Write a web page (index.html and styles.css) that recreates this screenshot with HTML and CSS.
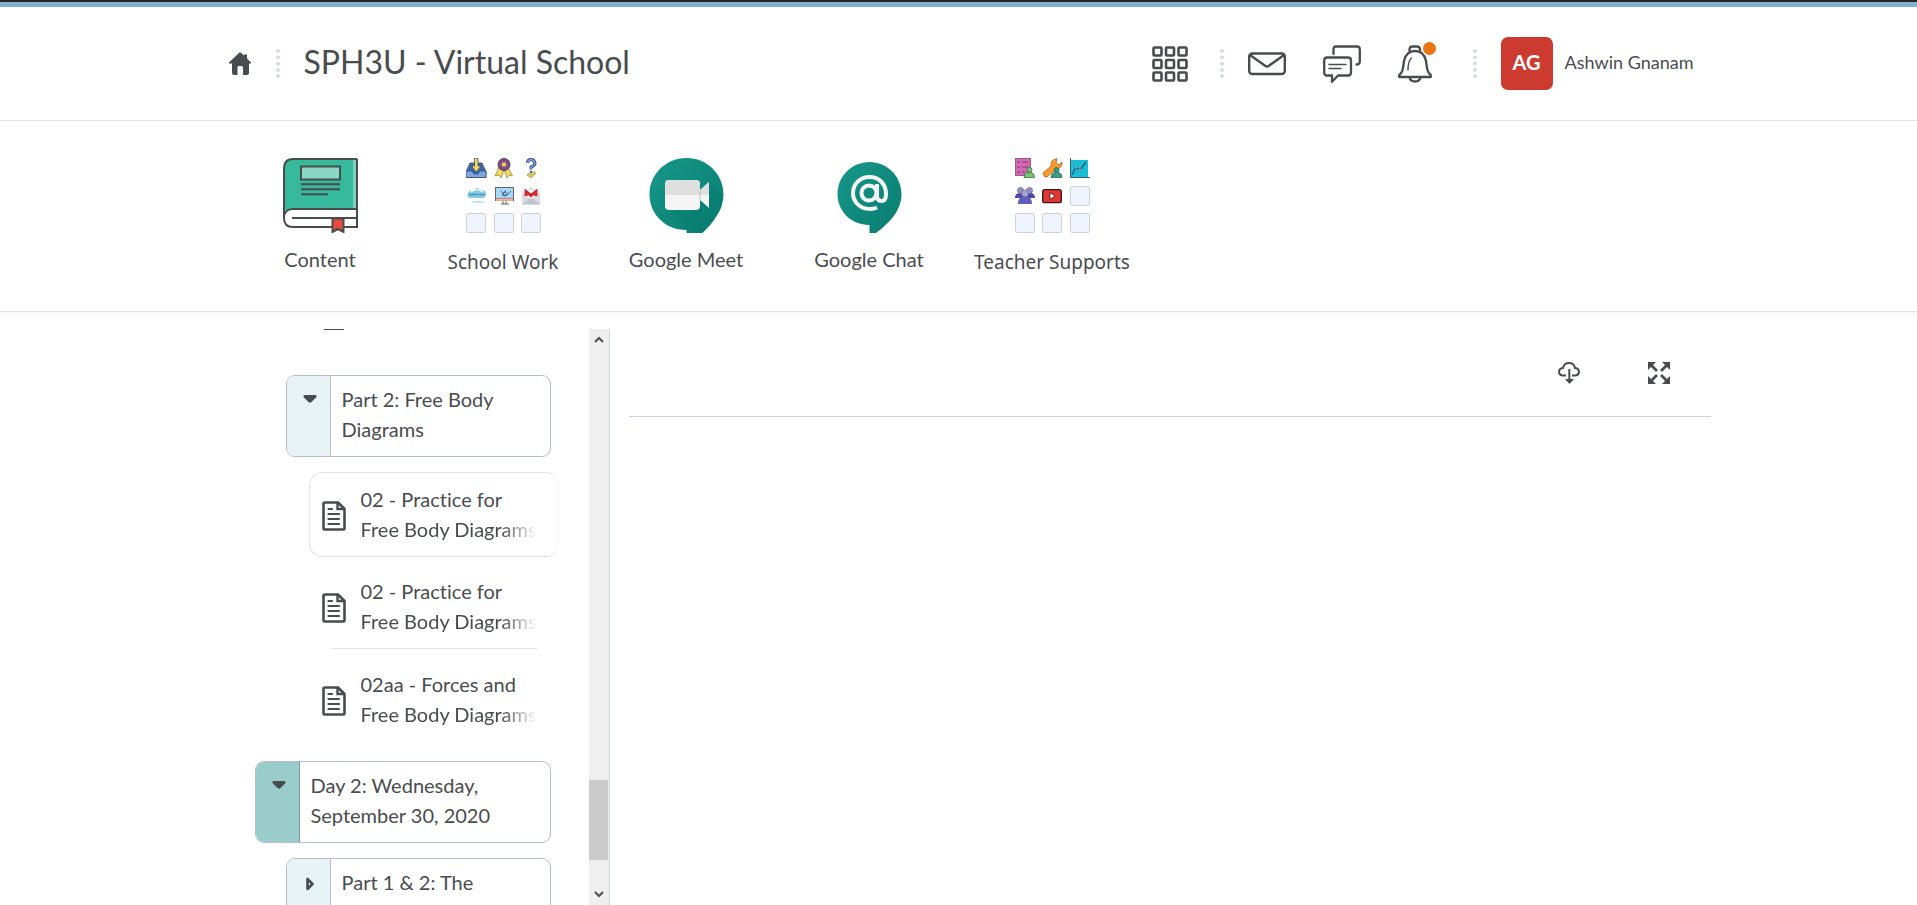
FILE: index.html
```html
<!DOCTYPE html>
<html lang="en">
<head>
<meta charset="utf-8">
<title>SPH3U - Virtual School</title>
<link rel="stylesheet" href="styles.css">
</head>
<body>
<svg class="defs" aria-hidden="true">
  <symbol id="doc" viewBox="0 0 24 30">
    <path d="M3.500 1.500H16L22.500 8V27.500Q22.500 28.500 21.500 28.500H2.500Q1.500 28.500 1.500 27.500V2.500Q1.500 1.500 3.500 1.500Z" fill="none" stroke="#494c4e" stroke-width="2.600" stroke-linejoin="round"/>
    <path d="M15.500 1.500V8H22.500" fill="none" stroke="#494c4e" stroke-width="2.400"/>
    <path d="M6.500 8H10M6.500 13H17M6.500 18H17M6.500 23H17" fill="none" stroke="#494c4e" stroke-width="2.200" stroke-linecap="round"/>
  </symbol>
  <symbol id="dots" viewBox="0 0 4 30">
    <g fill="#d3d9e3"><circle cx="2" cy="2" r="1.900"/><circle cx="2" cy="8.300" r="1.900"/><circle cx="2" cy="14.600" r="1.900"/><circle cx="2" cy="20.900" r="1.900"/><circle cx="2" cy="27.200" r="1.900"/></g>
  </symbol>
  <symbol id="slot" viewBox="0 0 20 20">
    <rect x=".5" y=".5" width="19" height="19" rx="1.500" fill="#eff3fb" stroke="#ccd3dc"/>
  </symbol>
</svg>

<div class="topline"></div>

<header class="masthead">
  <div class="wrap masthead-row">
    <a class="home" href="#" aria-label="My Home">
      <svg width="22" height="23" viewBox="0 0 22 23"><path d="M11 0 15 3.500V2.500H18V6.500L22 10.500V11.500H20V21Q20 23 18 23H14V15.500Q14 14 12.500 14H9.500Q8.500 14 8.500 15.500V23H5Q3 23 3 21V11.500H0V10.500Z" fill="#494c4e"/></svg>
    </a>
    <svg class="dots" width="4" height="30"><use href="#dots"/></svg>
    <h1><a href="#">SPH3U - Virtual School</a></h1>
    <nav class="tools" aria-label="Tools">
      <button type="button" aria-label="Select a course">
        <svg width="36" height="36" viewBox="0 0 36 36" fill="none" stroke="#494c4e" stroke-width="2.600"><rect x="1.500" y="1.500" width="8" height="8" rx="1"/><rect x="14" y="1.500" width="8" height="8" rx="1"/><rect x="26.500" y="1.500" width="8" height="8" rx="1"/><rect x="1.500" y="14" width="8" height="8" rx="1"/><rect x="14" y="14" width="8" height="8" rx="1"/><rect x="26.500" y="14" width="8" height="8" rx="1"/><rect x="1.500" y="26.500" width="8" height="8" rx="1"/><rect x="14" y="26.500" width="8" height="8" rx="1"/><rect x="26.500" y="26.500" width="8" height="8" rx="1"/></svg>
      </button>
      <svg class="dots" width="4" height="30"><use href="#dots"/></svg>
      <button type="button" aria-label="Message alerts">
        <svg width="38" height="38" viewBox="0 0 38 38" fill="none" stroke="#494c4e" stroke-width="2.400" stroke-linejoin="round"><rect x="1.200" y="8.500" width="35.600" height="20.500" rx="3"/><path d="M2 10 17.500 21Q19 22 20.500 21L36 10"/></svg>
      </button>
      <button type="button" aria-label="Subscription alerts">
        <svg width="38" height="38" viewBox="0 0 38 38" fill="none" stroke="#494c4e" stroke-width="2.300" stroke-linejoin="round" stroke-linecap="round"><path d="M10.500 9V4Q10.500 1.500 13 1.500H34Q36.800 1.500 36.800 4.500V16.500Q36.800 19.500 33.500 19.500"/><path d="M4 12.500H25Q28 12.500 28 15.500V27.500Q28 30.500 25 30.500H15L9 36.800V30.500H4Q1.200 30.500 1.200 27.500V15.500Q1.200 12.500 4 12.500Z"/><path d="M6 19.500H23M6 23.500H18" stroke-width="1.400"/></svg>
      </button>
      <button type="button" aria-label="Update alerts" class="bell">
        <svg width="34" height="38" viewBox="0 0 34 38" fill="none" stroke="#494c4e" stroke-width="2.300" stroke-linejoin="round" stroke-linecap="round"><path d="M11.500 6V4Q12 1.500 14.500 1.500H19Q21.500 1.500 22 4V6"/><path d="M17 6Q26 6 28 16C29 24 29.500 28 32.800 30V32H1.200V30C4.500 28 5 24 6 16Q8 6 17 6Z"/><path d="M11.500 32.500Q12.500 36.500 17 36.500T22.500 32.500"/><path d="M13.500 13Q10 16 10 25" stroke-width="1.400"/></svg>
        <span class="badge"></span>
      </button>
      <svg class="dots last" width="4" height="30"><use href="#dots"/></svg>
      <button type="button" class="user"><span class="avatar">AG</span><span class="name">Ashwin Gnanam</span></button>
    </nav>
  </div>
</header>

<nav class="coursenav" aria-label="Course">
  <div class="wrap coursenav-row">
    <a href="#">
      <svg width="75" height="75" viewBox="0 0 75 75"><path d="M10 1H74V52H1V11Q1 1 10 1Z" fill="#37b99b"/><path d="M70 2h3v49h-3z" fill="#82d1bf"/><path d="M10 51H74V69H10Q1 68 1 60T10 51Z" fill="#fff"/><g fill="none" stroke="#494c4e" stroke-width="2"><path d="M74 1H10Q1 1 1 11V60Q1 69 10 69H74V1M74 51H10Q1 51 1 60M9 60H73"/><rect x="18" y="8.500" width="39" height="13" fill="#8ad7c6"/><path d="M18 26.200H57M18 31.200H57M18 36.200H45"/></g><path d="M49.500 60.500H60.500V74L55 71 49.500 74Z" fill="#e84a42" stroke="#494c4e" stroke-width="2"/></svg>
      <span>Content</span>
    </a>
    <a href="#" class="folder">
      <svg width="75" height="75" viewBox="0 0 75 75">
        <g stroke="#3c4b6e" stroke-width=".8"><path d="M4 5H16L20 14V19.500H0V14Z" fill="#3f67ae"/><path d="M0 13H6L8 16H12L14 13H20V19.500H0Z" fill="#7ca6df"/><path d="M8.500 0H12V8H15L10.200 14 5.500 8H8.500Z" fill="#f3dd56"/></g>
        <path d="M33 9 29 18 33 17 35 20 38 12 41 20 43 17 46.500 18 42 9Z" fill="#f3dd56" stroke="#8e7b37" stroke-width=".7"/><circle cx="38" cy="6.500" r="6" fill="#7a4c8c" stroke="#59396a"/><circle cx="38" cy="6.500" r="2.300" fill="#f3c94e"/>
        <path d="M61.500 5Q61.500 1.500 65 1.500T69 5.500Q69 7.500 65 9V11.500" fill="none" stroke="#37558f" stroke-width="3"/><path d="M61.500 5Q61.500 1.500 65 1.500T69 5.500Q69 7.500 65 9V11.500" fill="none" stroke="#9fbce8" stroke-width="1"/><circle cx="65" cy="14" r="1.300" fill="#37558f"/><path d="M61.500 16 65 18.500 69.500 14" fill="none" stroke="#968b35" stroke-width="2.800"/><path d="M61.500 16 65 18.500 69.500 14" fill="none" stroke="#f0e05b" stroke-width="1.500"/>
        <path d="M4 40Q0 39 2 35 4 32 7 32 11 28 15 32 20 32 20 36T16 40Z" fill="#83caea"/><path d="M5 34Q11 29 17 34" stroke="#fff" stroke-width="1.500" fill="none"/><path d="M3 36.500H19" stroke="#397fa5" stroke-width="1.500" stroke-dasharray="1.500 .7"/><ellipse cx="12" cy="44" rx="7" ry="1" fill="#bfe5f5"/>
        <rect x="29.500" y="29.500" width="18" height="13" fill="#a7d8f5" stroke="#5d6674"/><path d="M30 40.500H47" stroke="#ec7656" stroke-width="1.200"/><path d="M30 42.500H47" stroke="#ddb66c"/><path d="M37 43V46M40 43V46M35 46H43" stroke="#5d6674"/><path d="M35 33 37 36 40 32M36 37H41L45 33" stroke="#416197" fill="none"/><circle cx="39" cy="36" r="2" fill="none" stroke="#416197"/>
        <path d="M56 35 65 29.500 74 35V46.500H56Z" fill="#d9dbe1"/><path d="M56 46.500 65 39 74 46.500" fill="#bfc4cd"/><path d="M58 32H72V36L65 41 58 36Z" fill="#fff"/><path d="M60 38V33.500L65 37.500 70 33.500V38" fill="none" stroke="#d7252e" stroke-width="3"/>
        <use href="#slot" x="0" y="55" width="20" height="20"/><use href="#slot" x="28" y="55" width="20" height="20"/><use href="#slot" x="55" y="55" width="20" height="20"/>
      </svg>
      <span>School Work</span>
    </a>
    <a href="#">
      <svg width="75" height="75" viewBox="0 0 75 75"><defs><linearGradient id="teal" x2="1" y2="1"><stop offset="0" stop-color="#16988a"/><stop offset="1" stop-color="#087c6f"/></linearGradient></defs><path d="M37.500 0C58 0 74.500 16 74.500 36.500 74.500 51 65 64 53.500 75H37.500V72C16 72 .5 56 .5 36.500.5 16 17 0 37.500 0Z" fill="url(#teal)"/><path d="M18 50 39 71 55 73 73 49V36L61 25 50 51Z" fill="#06796c" opacity=".35"/><path d="M20 22H47Q51 22 51 26V32L60 24V50L51 42V48Q51 52 47 52H20Q16 52 16 48V26Q16 22 20 22Z" fill="#f5f5f5"/><path d="M20 22H47Q51 22 51 26V32L60 24V37H16V26Q16 22 20 22Z" fill="#dedfdf"/><path d="M51 32V42" stroke="#b9c4c2" stroke-width="1"/></svg>
      <span>Google Meet</span>
    </a>
    <a href="#">
      <svg width="75" height="75" viewBox="0 0 75 75"><path d="M37.500 4C55 4 69.500 18 69.500 36 69.500 53 57 65 44 75H37.500V67C19 67 5.500 53 5.500 36 5.500 18 20 4 37.500 4Z" fill="url(#teal)"/><g fill="none" stroke="#f5f7f7" stroke-width="4"><circle cx="37" cy="35" r="7.500"/><path d="M45 26V38Q45 43 49.500 43T54 36C54 26 47 19 37.500 19S21 26 21 35 28 51 38 51Q42 51 45 49.500"/></g></svg>
      <span>Google Chat</span>
    </a>
    <a href="#" class="folder">
      <svg width="75" height="75" viewBox="0 0 75 75">
        <rect x=".5" y=".5" width="15" height="17" fill="#d568b4" stroke="#805070" stroke-width=".8"/><path d="M2 4 3 5 5 3M7 4H13M2 9 3 10 5 8M7 9H13M2 14 3 15 5 13M7 14H10" fill="none" stroke="#783765" stroke-width=".9"/><path d="M9 19.500Q9 15 13 14.500H16Q19.500 15 19.500 19.500Z" fill="#73c86b" stroke="#3b714a" stroke-width=".8"/><circle cx="14.500" cy="11.800" r="2.500" fill="#73c86b" stroke="#3b714a" stroke-width=".8"/>
        <path d="M28 15 36 8Q35 2 42 .5L41 5 44 7 47 4Q48 10 40 12L32 19Q29 20 28 15Z" fill="#fb9c29" stroke="#a7672a" stroke-width=".8"/><path d="M36 19.500Q36 15 40 14.500H43Q47 15 47 19.500Z" fill="#399e88" stroke="#24695c" stroke-width=".8"/><circle cx="41.500" cy="12" r="2.500" fill="#399e88" stroke="#24695c" stroke-width=".8"/>
        <rect x="56" y="2" width="17" height="17" fill="#16bdd5"/><path d="M55.500 0V19.500H75" fill="none" stroke="#3c6271"/><path d="M57 17 61 9 65 12 71 4" fill="none" stroke="#285d70" stroke-width="1.400"/><circle cx="61" cy="9" r="1.200" fill="#fff" stroke="#285d70" stroke-width=".7"/><circle cx="65" cy="12" r="1.200" fill="#fff" stroke="#285d70" stroke-width=".7"/>
        <path d="M0 40Q0 35 5 35H15Q20 35 20 40Z" fill="#4e48a2"/><circle cx="5.500" cy="32.500" r="3" fill="#9294bd" stroke="#60608c" stroke-width=".7"/><circle cx="14.500" cy="32.500" r="3" fill="#9294bd" stroke="#60608c" stroke-width=".7"/><path d="M3 46Q3 39 8 39H12Q17 39 17 46Z" fill="#615dc0"/><circle cx="10" cy="35.500" r="3.500" fill="#a6a4cf" stroke="#686493" stroke-width=".7"/>
        <rect x="27.700" y="31.700" width="18.600" height="13" rx="2" fill="#e33532" stroke="#3a1414" stroke-width="1.300"/><path d="M35 34.500V41.500L40 38Z" fill="#fff" stroke="#3a1414" stroke-width=".8"/>
        <use href="#slot" x="55" y="28" width="20" height="20"/><use href="#slot" x="0" y="55" width="20" height="20"/><use href="#slot" x="27" y="55" width="20" height="20"/><use href="#slot" x="55" y="55" width="20" height="20"/>
      </svg>
      <span>Teacher Supports</span>
    </a>
  </div>
</nav>

<main class="wrap viewer">
  <aside class="sidebar">
    <div class="tree">
      <div class="tree-top"><svg width="20" height="1" viewBox="0 0 20 1"><path d="M0 .5H20" stroke="#494c4e"/></svg></div>
      <section class="module part">
        <button type="button" aria-label="Collapse Part 2"><svg width="14" height="8" viewBox="0 0 14 8"><path d="M2 0H12Q14.500 0 13 2.500L8.500 7Q7 8.500 5.500 7L1 2.500Q-.5 0 2 0Z" fill="#494c4e"/></svg></button>
        <a href="#">Part 2: Free Body Diagrams</a>
      </section>
      <ul class="topics">
        <li class="selected"><a href="#"><svg width="24" height="30"><use href="#doc"/></svg><span class="title"><span>02 - Practice for</span><span class="fade">Free Body Diagrams</span></span></a></li>
        <li class="ruled"><a href="#"><svg width="24" height="30"><use href="#doc"/></svg><span class="title"><span>02 - Practice for</span><span class="fade">Free Body Diagrams</span></span></a></li>
        <li class="final"><a href="#"><svg width="24" height="30"><use href="#doc"/></svg><span class="title"><span>02aa - Forces and</span><span class="fade">Free Body Diagrams</span></span></a></li>
      </ul>
      <section class="module day">
        <button type="button" aria-label="Collapse Day 2"><svg width="14" height="8" viewBox="0 0 14 8"><path d="M2 0H12Q14.500 0 13 2.500L8.500 7Q7 8.500 5.500 7L1 2.500Q-.5 0 2 0Z" fill="#494c4e"/></svg></button>
        <a href="#">Day 2: Wednesday, September 30, 2020</a>
      </section>
      <section class="module part">
        <button type="button" aria-label="Expand Part 1 and 2"><svg width="8" height="14" viewBox="0 0 8 14"><path d="M1.500 2V12L6.500 7Z" fill="none" stroke="#494c4e" stroke-width="2.600" stroke-linejoin="round"/></svg></button>
        <a href="#">Part 1 &amp; 2: The</a>
      </section>
    </div>
    <div class="scrollbar">
      <svg width="10" height="7" viewBox="0 0 10 7"><path d="M1 6 5 2 9 6" fill="none" stroke="#505050" stroke-width="2"/></svg>
      <span class="thumb"></span>
      <svg width="10" height="7" viewBox="0 0 10 7"><path d="M1 1 5 5 9 1" fill="none" stroke="#505050" stroke-width="2"/></svg>
    </div>
  </aside>
  <section class="content">
    <div class="content-tools">
      <button type="button" aria-label="Download"><svg width="22" height="22" viewBox="0 0 22 22"><path d="M8 13.500H4.500Q1 13 1 9.800 1 6.500 5 6 6 1 11 1T17 6Q21 6.500 21 9.800 21 13 17.500 13.500H14" fill="none" stroke="#494c4e" stroke-width="2"/><path d="M11.300 7V17" stroke="#494c4e" stroke-width="2"/><path d="M7 17H16L12.500 21Q11.500 22 10.500 21Z" fill="#494c4e"/></svg></button>
      <button type="button" aria-label="Full screen"><svg width="22" height="22" viewBox="0 0 22 22"><path d="M0 0H8L0 8ZM22 0V8L14 0ZM0 22V14L8 22ZM22 22H14L22 14Z" fill="#494c4e"/><path d="M3 3 9 9M19 3 13 9M3 19 9 13M19 19 13 13" stroke="#494c4e" stroke-width="2.800"/></svg></button>
    </div>
  </section>
</main>
</body>
</html>
```

FILE: styles.css
```css
* { box-sizing: border-box; }
body {
  margin: 0;
  height: 100vh;
  display: flex;
  flex-direction: column;
  overflow: hidden;
  background: #fff;
  color: #494c4e;
  font: 20px/30px Lato, "Liberation Sans", sans-serif;
  font-variant-ligatures: none;
}
a { color: inherit; text-decoration: none; }
button { margin: 0; padding: 0; border: 0; background: none; color: inherit; font: inherit; }
svg { display: block; flex: none; }
.defs { position: absolute; width: 0; height: 0; }
.wrap { width: 100%; max-width: 1504px; margin: 0 auto; }

.topline { height: 7px; flex: none; border-top: 2px solid #252525; background: #82b3ce; }

.masthead { flex: none; border-bottom: 1px solid #e6e6e6; }
.masthead-row { display: flex; align-items: center; height: 113px; padding: 0 17px 0 22px; }
.home { margin-right: 25px; }
h1 { margin: 0 0 4px 24px; font-size: 32px; line-height: 40px; font-weight: 400; white-space: nowrap; }
.tools { display: flex; align-items: center; margin-left: auto; }
.tools > .dots { margin: 0 24px 0 32px; }
.tools > .last { margin-left: 41px; }
.tools button + button { margin-left: 37px; }
.bell { position: relative; }
.badge { position: absolute; top: -3px; right: -4px; width: 13px; height: 13px; border-radius: 50%; background: #e87511; }
.user { display: flex; align-items: center; gap: 12px; font-size: 18px; white-space: nowrap; }
.name { padding-bottom: 3px; }
.avatar { width: 52px; height: 53px; border-radius: 7px; background: #cd3a2f; color: #fff; font-size: 20px; font-weight: 700; line-height: 50px; text-align: center; }

.coursenav { flex: none; border-bottom: 5px solid #fafafa; }
.coursenav-row { display: flex; height: 190px; padding: 37px 22px 0; }
.coursenav a { display: flex; flex-direction: column; align-items: center; gap: 11px; width: 183px; white-space: nowrap; }
.coursenav .folder { gap: 14px; font-family: "Noto Sans", "Open Sans", sans-serif; font-size: 19px; }
.coursenav::after { content: ""; display: block; height: 1px; background: #e3e3e3; }

.viewer { flex: 1; min-height: 0; display: flex; gap: 19px; padding-top: 12px; }
.sidebar { flex: none; display: flex; width: 403px; overflow: hidden; border-right: 1px solid #cdd5dc; }
.tree { flex: 1; min-width: 0; overflow: hidden; padding-left: 48px; }
.tree-top { height: 46px; padding-left: 69px; }
.module { display: flex; height: 82px; margin-right: 38px; border: 1px solid #b4bdca; border-radius: 9px; overflow: hidden; }
.module button { flex: none; display: flex; justify-content: center; width: 44px; padding: 19px 0 0 3px; border-right: 1px solid #b4bdca; background: #e8f3f5; }
.module > a { padding: 8px 11px; }
.part { margin-left: 31px; }
.part button[aria-label^="Expand"] { padding-top: 18px; }
.day { margin-bottom: 15px; }
.day button { background: #99cccb; border-color: #6ba0a5; }

.topics { margin: 15px 30px 0 54px; padding: 0; list-style: none; }
.topics li { height: 85px; padding: 11px 12px 0; border: 1px solid transparent; }
.topics a { display: flex; align-items: center; gap: 15px; }
.topics svg { margin-top: 4px; }
.topics .selected { border-color: #e3e5e9; border-right-color: #f4f5f6; border-radius: 13px; }
.topics .ruled { height: 93px; margin-top: 7px; background: linear-gradient(#e3e6e9, #e3e6e9) 21px 83px / 206px 1px no-repeat; }
.topics .final { height: 104px; }
.title { width: 176px; overflow: hidden; white-space: nowrap; }
.title span { display: block; }
.title .fade { mask-image: linear-gradient(90deg, #000 140px, transparent 176px); }

.scrollbar { display: flex; flex-direction: column; align-items: center; flex: none; width: 20px; padding: 7px 0; background: #efefef; }
.thumb { width: 20px; height: 80px; margin: auto 0 31px; background: #cbcbcb; border-right: 1px solid #efefef; }

.content { flex: 1; min-width: 0; }
.content-tools { display: flex; justify-content: flex-end; gap: 68px; height: 88px; padding: 33px 41px 0 0; border-bottom: 1px solid #cdd0dc; }
.content-tools button { height: 22px; }
```
